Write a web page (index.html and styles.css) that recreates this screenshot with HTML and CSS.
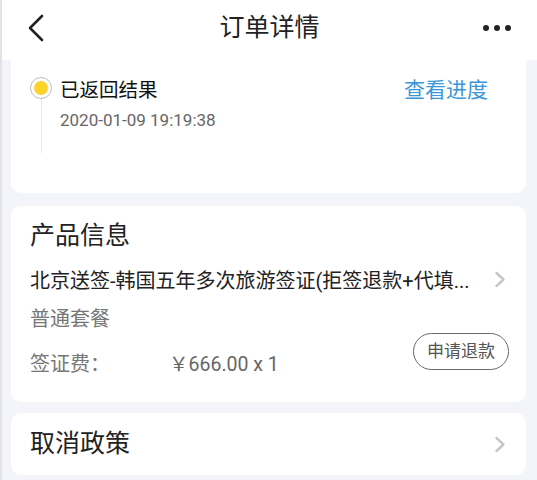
FILE: index.html
```html
<!DOCTYPE html>
<html lang="zh">
<head>
<meta charset="utf-8">
<link rel="stylesheet" href="styles.css">
</head>
<body>
<div class="page">
  <header class="nav">
    <svg class="back" width="18" height="28" viewBox="0 0 18 28"><path d="M15 2 L3 14 L15 26" fill="none" stroke="#222" stroke-width="2.6" stroke-linecap="round" stroke-linejoin="round"/></svg>
    <h1 class="title">订单详情</h1>
    <div class="more"><span></span><span></span><span></span></div>
  </header>

  <section class="card card-status">
    <div class="step">
      <div class="rail">
        <span class="dot"></span>
        <span class="line"></span>
      </div>
      <div class="step-body">
        <div class="step-head">
          <span class="step-title">已返回结果</span>
          <a class="link">查看进度</a>
        </div>
        <div class="step-time">2020-01-09 19:19:38</div>
      </div>
    </div>
  </section>

  <section class="card card-product">
    <h2 class="card-title">产品信息</h2>
    <div class="prod-row">
      <span class="prod-name">北京送签-韩国五年多次旅游签证(拒签退款+代填...</span>
      <svg class="chev" width="12" height="17" viewBox="0 0 12 17"><path d="M2.5 2 L9.5 8.5 L2.5 15" fill="none" stroke="#c6c6c6" stroke-width="2.4" stroke-linecap="round" stroke-linejoin="round"/></svg>
    </div>
    <div class="pkg">普通套餐</div>
    <div class="fee-row">
      <span class="fee-label">签证费：</span>
      <span class="fee-val">￥666.00 x 1</span>
      <button class="refund">申请退款</button>
    </div>
  </section>

  <section class="card card-policy">
    <h2 class="card-title">取消政策</h2>
    <svg class="chev" width="12" height="17" viewBox="0 0 12 17"><path d="M2.5 2 L9.5 8.5 L2.5 15" fill="none" stroke="#c6c6c6" stroke-width="2.4" stroke-linecap="round" stroke-linejoin="round"/></svg>
  </section>
</div>
</body>
</html>
```

FILE: styles.css
```css
* { box-sizing: border-box; }
html, body { margin: 0; padding: 0; }
body {
  background: #f4f5fa;
  font-family: Roboto, "Noto Sans CJK SC", sans-serif;
  color: #222;
  width: 537px;
  height: 480px;
  overflow: hidden;
}
.page {
  border-left: 2px solid #e3e3e6;
  min-height: 480px;
  padding: 0 11px 0 9px;
}
.nav {
  height: 60px;
  margin: 0 -11px 0 -9px;
  background: #fff;
  display: flex;
  align-items: center;
  justify-content: space-between;
  padding: 0 26px 0 25px;
  position: relative;
}
.back { display: block; margin-top: -4px; }
.title {
  margin: 0;
  font-size: 25px;
  font-weight: 400;
  color: #222;
  position: absolute;
  left: 0; right: 0;
  text-align: center;
  top: 10px;
  line-height: 36px;
  pointer-events: none;
}
.more { display: flex; gap: 5px; margin-top: -4px; }
.more span { width: 6px; height: 6px; border-radius: 50%; background: #222; }

.card {
  background: #fff;
  border-radius: 10px;
}
.card-status {
  border-top-left-radius: 0;
  border-top-right-radius: 0;
  height: 133px;
  padding: 17px 19px 0 19px;
}
.step { display: flex; }
.rail {
  width: 22px;
  display: flex;
  flex-direction: column;
  align-items: center;
}
.dot {
  width: 22px; height: 22px;
  border-radius: 50%;
  border: 1px solid #bdbdbd;
  background: #fff;
  display: flex;
  align-items: center;
  justify-content: center;
  position: relative;
}
.dot::after {
  content: "";
  width: 14px; height: 14px;
  border-radius: 50%;
  background: #fdd22b;
}
.line { width: 1px; height: 54px; background: #e6e6e6; }
.step-body { flex: 1; padding-left: 8px; }
.step-head {
  display: flex;
  justify-content: space-between;
  align-items: center;
  height: 22px;
}
.step-title { font-size: 19.5px; color: #111; }
.link { font-size: 21px; color: #3b96da; margin-right: 19px; }
.step-time { font-size: 17px; color: #666; margin-top: 11px; }

.card-product {
  margin-top: 13px;
  height: 196px;
  padding: 13px 19px 0 19px;
}
.card-title {
  margin: 0;
  font-size: 25px;
  font-weight: 400;
  color: #222;
  line-height: 34px;
}
.prod-row {
  display: flex;
  justify-content: space-between;
  align-items: center;
  margin-top: 12px;
  height: 28px;
}
.prod-name { font-size: 20px; color: #222; white-space: nowrap; }
.chev { display: block; margin-right: 1px; flex: none; }
.pkg { font-size: 20px; color: #777; margin-top: 12px; line-height: 28px; }
.fee-row {
  display: flex;
  align-items: center;
  margin-top: 2px;
  height: 40px;
}
.fee-label { font-size: 20px; color: #777; width: 139px; padding-top: 14px; }
.fee-val { font-size: 19.5px; color: #666; padding-top: 14px; }
.refund {
  margin-left: auto;
  width: 96px;
  height: 37px;
  border: 1.5px solid #6a6a6a;
  border-radius: 19px;
  background: #fff;
  font-family: Roboto, "Noto Sans CJK SC", sans-serif;
  font-size: 17px;
  color: #555;
  padding: 0 0 3px 0;
  margin-top: -8px;
  margin-right: -2px;
}

.card-policy {
  margin-top: 11px;
  height: 62px;
  padding: 0 19px;
  display: flex;
  justify-content: space-between;
  align-items: center;
}
.card-policy .chev { margin-right: 1px; }
```
